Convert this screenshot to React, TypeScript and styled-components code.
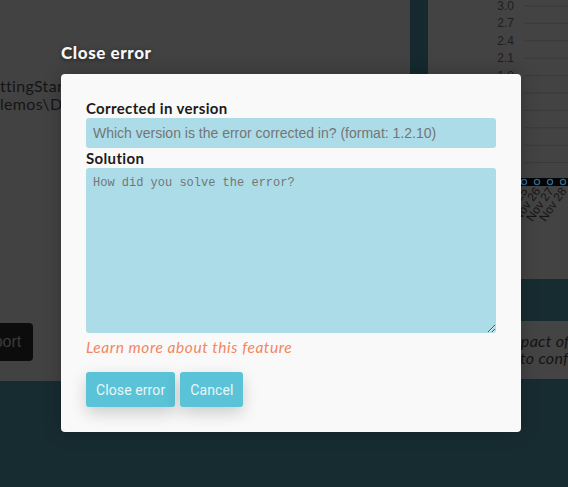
import React from 'react';
import styled, { createGlobalStyle } from 'styled-components';

const Global = createGlobalStyle`
  html, body, #root { margin: 0; padding: 0; height: 100%; }
  body { overflow: hidden; font-family: Lato, "Noto Sans", sans-serif; }
  * { box-sizing: border-box; }
`;

const Page = styled.div`
  position: relative;
  height: 100vh;
  display: flex;
  flex-direction: column;
  background: #172c31;
  overflow: hidden;
`;

const Top = styled.div`
  height: 381px;
  display: grid;
  grid-template-columns: 410px 18px 1fr;
`;

const Main = styled.div`
  background: #424242;
  display: flex;
  flex-direction: column;
  align-items: flex-start;
  padding-top: 77px;
  overflow: hidden;
`;

const PathLine = styled.div`
  font-family: Lato, sans-serif;
  font-size: 16px;
  line-height: 18px;
  letter-spacing: 0.3px;
  color: #151515;
  white-space: nowrap;
`;

const DarkButton = styled.div`
  margin-top: 210px;
  margin-left: -37px;
  height: 38px;
  padding: 0 12px 0 12px;
  display: flex;
  align-items: center;
  background: #0c0c0c;
  border-radius: 4px;
  color: #3b3b3b;
  font-family: "Liberation Sans", Arial, sans-serif;
  font-size: 16px;
`;

const Strip = styled.div`
  background: #15292e;
`;

const Side = styled.div`
  display: flex;
  flex-direction: column;
  background: #172c31;
`;

const ChartBox = styled.div`
  height: 279px;
  background: #434343;
`;

const Band = styled.div`
  height: 42px;
`;

const Card = styled.div`
  height: 58px;
  background: #444444;
  padding-top: 11px;
  font-family: Lato, sans-serif;
  font-style: italic;
  font-size: 16px;
  line-height: 17px;
  letter-spacing: 0.3px;
  color: #131313;
  white-space: nowrap;
  overflow: hidden;
`;

const CardLine = styled.div<{ $indent: number }>`
  padding-left: ${p => p.$indent}px;
`;

const Bottom = styled.div`
  flex: 1;
  background: #172c31;
`;

const Overlay = styled.div`
  position: absolute;
  inset: 0;
  padding: 42px 0 0 61px;
`;

const Title = styled.h2`
  margin: 0 0 10px;
  font-family: Lato, sans-serif;
  font-weight: 900;
  font-size: 17px;
  line-height: 22px;
  letter-spacing: 0.6px;
  color: #f7f7f7;
  text-shadow: 0 1px 4px rgba(0, 0, 0, 0.55);
`;

const Dialog = styled.div`
  width: 460px;
  background: #f9f9f9;
  border-radius: 4px;
  padding: 24px 25px 25px;
  display: flex;
  flex-direction: column;
  box-shadow: 0 0 18px rgba(0, 0, 0, 0.25);
`;

const Label = styled.label`
  display: block;
  font-family: Lato, sans-serif;
  font-weight: 700;
  font-size: 15px;
  line-height: 20px;
  letter-spacing: 0.35px;
  color: #1b1b1b;
`;

const Input = styled.input`
  display: block;
  width: 100%;
  height: 30px;
  border: none;
  outline: none;
  border-radius: 3px;
  background: #acdce8;
  padding: 0 7px;
  font-family: "Liberation Sans", Arial, sans-serif;
  font-size: 14px;
  color: #222;
  &::placeholder { color: #757575; }
`;

const TextArea = styled.textarea`
  display: block;
  width: 100%;
  height: 165px;
  border: none;
  outline: none;
  border-radius: 3px;
  background: #acdce8;
  padding: 8px 7px;
  font-family: "Liberation Mono", monospace;
  font-size: 12px;
  resize: vertical;
  &::placeholder { color: #757575; }
`;

const LearnLink = styled.a`
  margin-top: 4px;
  font-family: Lato, sans-serif;
  font-style: italic;
  font-size: 15.5px;
  line-height: 20px;
  letter-spacing: 0.55px;
  color: #f2875f;
  text-decoration: none;
`;

const Actions = styled.div`
  margin-top: 15px;
  display: flex;
  gap: 5px;
`;

const Button = styled.button`
  height: 35px;
  padding: 0 10px;
  border: none;
  border-radius: 3px;
  background: #5ac3d7;
  color: #e9f6f9;
  font-family: Roboto, "Liberation Sans", Arial, sans-serif;
  font-size: 14px;
  letter-spacing: 0.1px;
  box-shadow: 0 6px 16px rgba(0, 0, 0, 0.18);
`;

const Chart: React.FC = () => {
  const labels = ['3.0', '2.7', '2.4', '2.1', '1.8', '1.5', '1.2', '0.9', '0.6', '0.3'];
  const step = 17.4;
  const xs = [83, 96, 109, 122, 135];
  return (
    <svg width="140" height="279" viewBox="0 0 140 279">
      {labels.map((l, i) => (
        <g key={l}>
          <text x="86" y={6 + i * step + 4} textAnchor="end" fontSize="12" fontFamily="Liberation Sans, Arial, sans-serif" fill="#1e1e1e">{l}</text>
          <line x1="96" x2="140" y1={6 + i * step} y2={6 + i * step} stroke="#3a3a3a" strokeWidth="1" />
        </g>
      ))}
      <rect x="70" y="178" width="70" height="8" fill="#050505" />
      {xs.map((x, i) => (
        <g key={x}>
          <circle cx={x} cy="182" r="2.6" fill="#0a0a0a" stroke="#2d6a8f" strokeWidth="1.3" />
          <text
            x={x + 4}
            y="191"
            textAnchor="end"
            fontSize="12"
            fontFamily="Liberation Sans, Arial, sans-serif"
            fill="#141414"
            transform={`rotate(-55 ${x + 4} 191)`}
          >
            {`Nov ${24 + i}`}
          </text>
        </g>
      ))}
    </svg>
  );
};

export default function App() {
  return (
    <>
      <Global />
      <Page>
        <Top>
          <Main>
            <PathLine>ttingStarted\Demos</PathLine>
            <PathLine>lemos\Docs</PathLine>
            <DarkButton>Export</DarkButton>
          </Main>
          <Strip />
          <Side>
            <ChartBox>
              <Chart />
            </ChartBox>
            <Band />
            <Card>
              <CardLine $indent={76}>impact of</CardLine>
              <CardLine $indent={92}>to confirm</CardLine>
            </Card>
          </Side>
        </Top>
        <Bottom />
        <Overlay>
          <Title>Close error</Title>
          <Dialog>
            <Label>Corrected in version</Label>
            <Input placeholder="Which version is the error corrected in? (format: 1.2.10)" />
            <Label>Solution</Label>
            <TextArea placeholder="How did you solve the error?" />
            <LearnLink href="#">Learn more about this feature</LearnLink>
            <Actions>
              <Button>Close error</Button>
              <Button>Cancel</Button>
            </Actions>
          </Dialog>
        </Overlay>
      </Page>
    </>
  );
}
